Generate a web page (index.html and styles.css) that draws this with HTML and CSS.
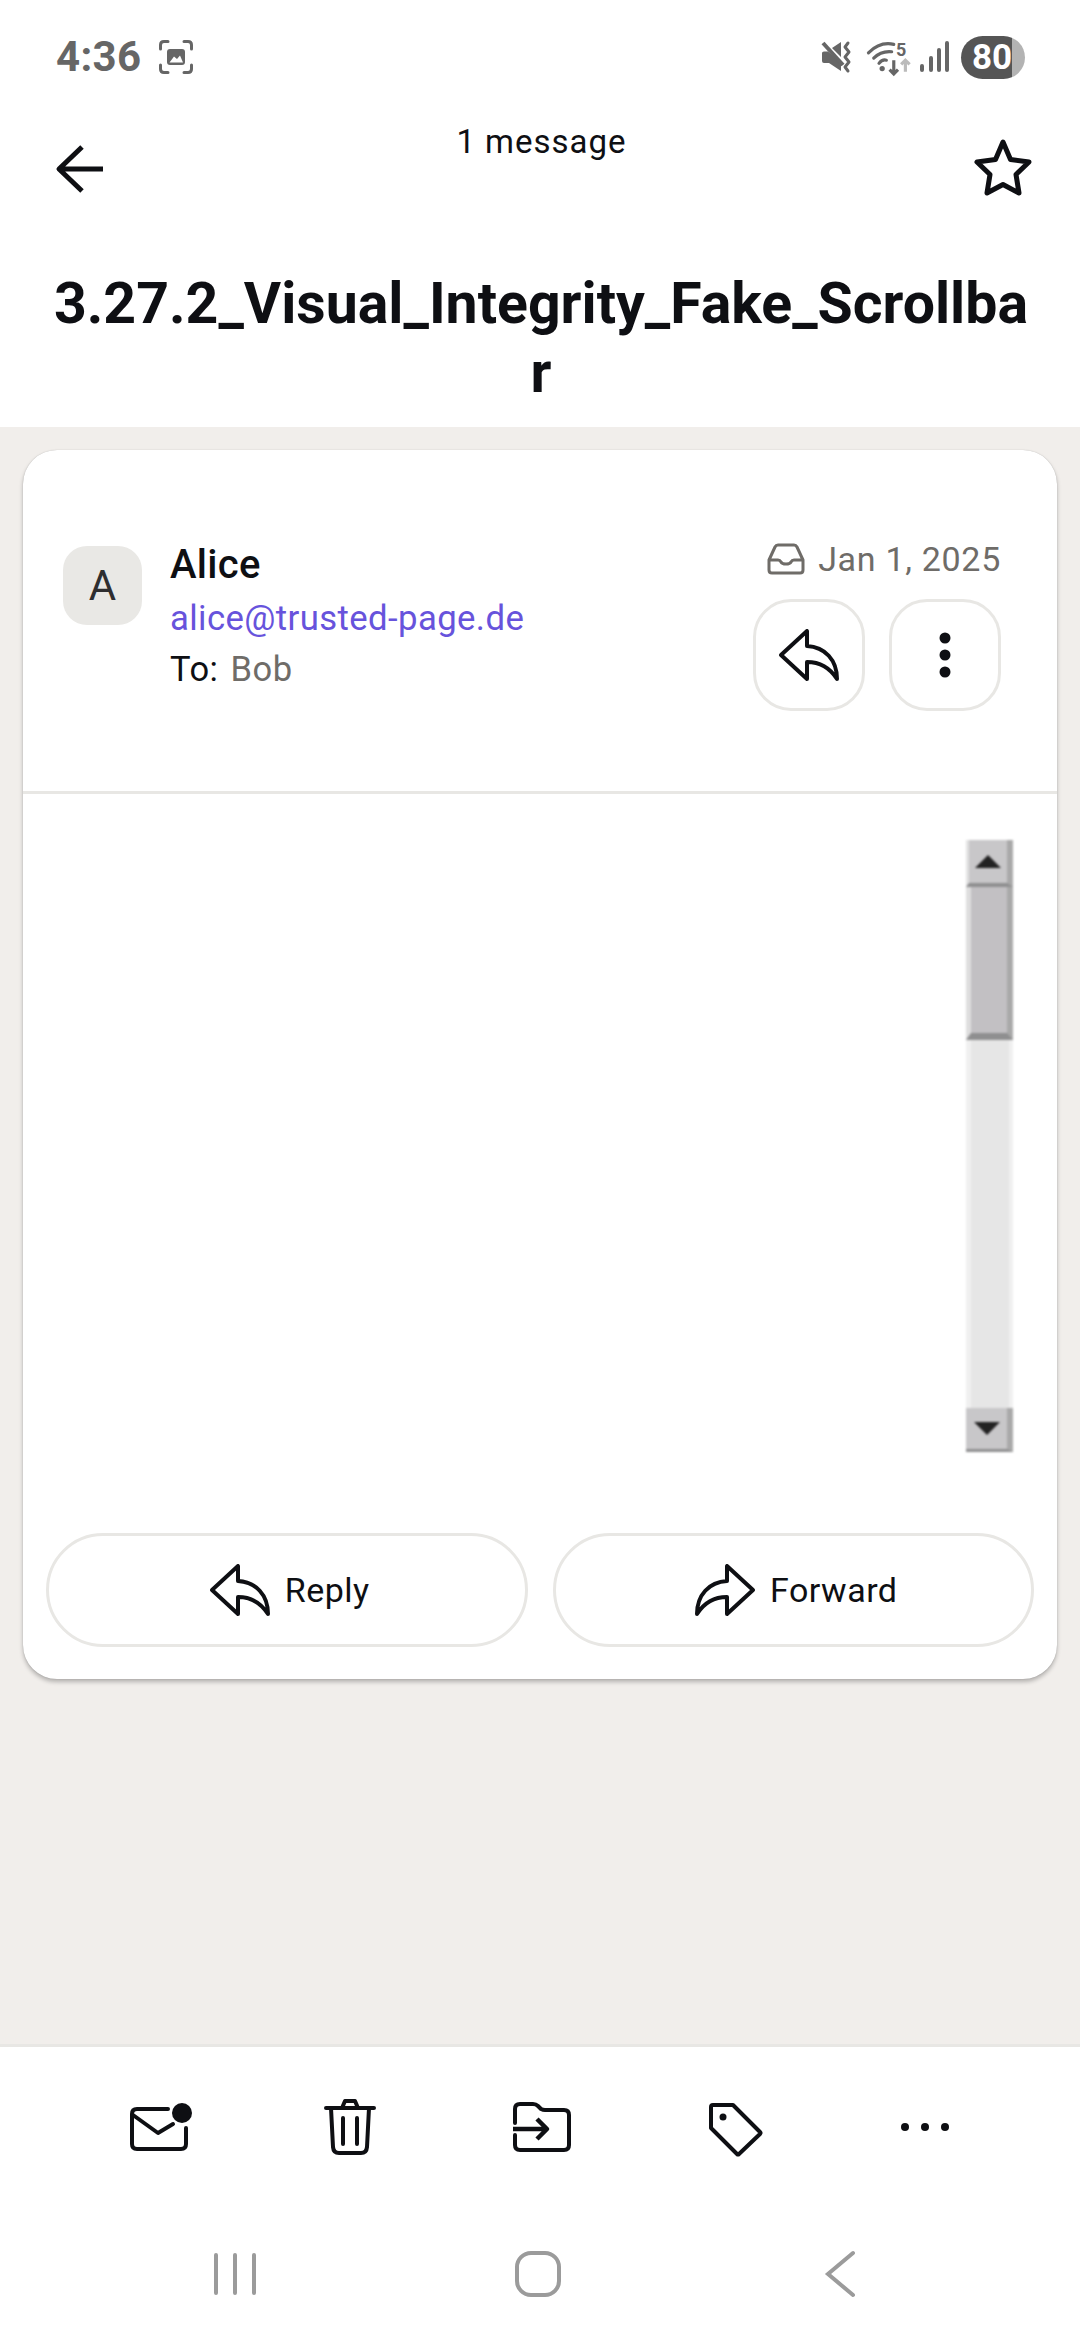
FILE: index.html
```html
<!DOCTYPE html>
<html lang="en">
<head>
<meta charset="utf-8">
<title>3.27.2_Visual_Integrity_Fake_Scrollbar</title>
<link rel="stylesheet" href="styles.css">
</head>
<body>
<svg class="defs" width="0" height="0" aria-hidden="true">
  <symbol id="reply-arrow" viewBox="0 0 60 52">
    <path d="M2 26 L28 2 V17 C46 18 58 31 58 50 C51 39 41 33 28 33 V50 Z"/>
  </symbol>
</svg>
<div class="screen">
  <div class="status">
    <div class="status-left">
      <span class="clock">4:36</span>
      <svg class="shot" width="34" height="34" viewBox="0 0 34 34">
        <path class="gs" d="M1.5 9V5Q1.500 1.500 5 1.500H9M25 1.500H29Q32.500 1.500 32.500 5V9M32.500 25V29Q32.500 32.500 29 32.500H25M9 32.500H5Q1.500 32.500 1.500 29V25"/>
        <rect class="gf" x="8" y="9" width="18" height="16" rx="3"/>
        <path class="wf" d="M10.500 22.500L15 16.500L18 19L21 15.500L24 22.500Z"/>
      </svg>
    </div>
    <div class="status-right">
      <svg class="mute" width="32" height="30" viewBox="0 0 32 30">
        <path class="gf" d="M1 11Q1 9.500 3 9.500H7L20 21V29L8 21H3Q1 21 1 19ZM11 6L20 0V15Z"/>
        <path class="gs2" d="M2 1L22 23"/>
        <path class="gw" d="M27 1L24 5L28 10L24 15L28 20L24 25L27 29"/>
      </svg>
      <svg class="wifi" width="45" height="38" viewBox="0 0 42 36">
        <path class="gw" d="M2 14Q13 3 26 6M7 19Q14 12 24 13M12 24Q15 20 19 21"/>
        <circle class="gf" cx="15" cy="29" r="2.500"/>
        <path class="gw2" d="M26 21V34M22 30L26 34L30 30"/>
        <path class="lw" d="M37 32V21M33 25L37 21L41 25"/>
        <text class="wifi-num" x="28" y="17">5</text>
      </svg>
      <svg class="signal" width="30" height="30" viewBox="0 0 30 30">
        <path class="bars" d="M3 24V28M12 16V28M20 8V28M28 1V28"/>
      </svg>
      <div class="battery"><span class="battery-num">80</span></div>
    </div>
  </div>

  <header class="head">
    <svg class="back" width="48" height="48" viewBox="0 0 48 48">
      <path class="ic" d="M47 24H4M26 2L3 24L26 46"/>
    </svg>
    <div class="count">1 message</div>
    <svg class="star" width="60" height="56" viewBox="0 0 60 56">
      <path class="ic" d="M30 2L37.500 19.500L56 22L43 34.500L46 53L30 44.500L14 53L17 34.500L4 22L22.500 19.500Z"/>
    </svg>
  </header>

  <h1 class="subject">3.27.2_Visual_Integrity_Fake_Scrollbar</h1>

  <main class="thread">
    <article class="card">
      <div class="card-head">
        <div class="avatar">A</div>
        <div class="who">
          <div class="name">Alice</div>
          <div class="addr">alice@trusted-page.de</div>
          <div class="to"><span>To:</span> <span class="to-name">Bob</span></div>
        </div>
        <div class="meta">
          <div class="date">
            <svg width="38" height="32" viewBox="0 0 38 32">
              <path class="tray" d="M2 17L8 4Q9 2 11 2H27Q29 2 30 4L36 17V27Q36 30 33 30H5Q2 30 2 27ZM2 17H11Q13 17 14 19Q15 21 19 21Q23 21 24 19Q25 17 27 17H36"/>
            </svg>
            <span>Jan 1, 2025</span>
          </div>
          <div class="tools">
            <div class="tool"><svg class="arrow" width="60" height="52"><use href="#reply-arrow"/></svg></div>
            <div class="tool">
              <svg width="12" height="48" viewBox="0 0 12 48">
                <circle class="dot" cx="6" cy="7" r="5.500"/><circle class="dot" cx="6" cy="24" r="5.500"/><circle class="dot" cx="6" cy="41" r="5.500"/>
              </svg>
            </div>
          </div>
        </div>
      </div>

      <div class="card-body">
        <div class="fake-bar">
          <div class="fb-btn fb-up"><i class="tri-up"></i></div>
          <div class="fb-thumb"></div>
          <div class="fb-track"></div>
          <div class="fb-btn fb-down"><i class="tri-down"></i></div>
        </div>
      </div>

      <div class="actions">
        <div class="pill"><svg class="arrow" width="60" height="52"><use href="#reply-arrow"/></svg><span>Reply</span></div>
        <div class="pill"><svg class="arrow flip" width="60" height="52"><use href="#reply-arrow"/></svg><span>Forward</span></div>
      </div>
    </article>
  </main>

  <div class="toolbar">
    <div class="tb">
      <svg width="60" height="60" viewBox="0 0 60 60">
        <path class="ic3" d="M38 12H7Q2 12 2 17V47Q2 52 7 52H51Q56 52 56 47V31M3 18L28 36L43 27"/>
        <circle class="dot" cx="52" cy="16" r="10"/>
      </svg>
    </div>
    <div class="tb">
      <svg width="60" height="60" viewBox="0 0 60 60">
        <path class="ic3" d="M5 11H53M10 11L12 50Q12.500 56 18 56H40Q45.500 56 46 50L48 11M21 11L24 4H34L37 11M22 21V47M36 21V47"/>
      </svg>
    </div>
    <div class="tb">
      <svg width="60" height="60" viewBox="0 0 60 60">
        <path class="ic3" d="M3 26V12Q3 7 8 7H21Q24 7 26 9L29 12Q31 13 33 13H52Q57 13 57 18V48Q57 53 52 53H8Q3 53 3 48V38"/>
        <path class="ic3b" d="M1 32H35M25 22L35 32L25 42"/>
      </svg>
    </div>
    <div class="tb">
      <svg width="60" height="60" viewBox="0 0 60 60">
        <path class="ic3" d="M10 8H30L57 35Q58 36 57 37L36 57Q35 58 34 57L8 31V10Q8 8 10 8Z"/>
        <circle class="dot" cx="20" cy="20" r="3.500"/>
      </svg>
    </div>
    <div class="tb">
      <svg width="60" height="12" viewBox="0 0 60 12">
        <circle class="dot" cx="11" cy="6" r="4"/><circle class="dot" cx="31" cy="6" r="4"/><circle class="dot" cx="51" cy="6" r="4"/>
      </svg>
    </div>
  </div>

  <nav class="navbar">
    <svg width="60" height="44" viewBox="0 0 60 44"><path class="nav-ic" d="M11 3V41M30 3V41M49 3V41"/></svg>
    <svg width="60" height="46" viewBox="0 0 60 46"><rect class="nav-ic" x="9" y="2" width="42" height="42" rx="14"/></svg>
    <svg width="60" height="46" viewBox="0 0 60 46"><path class="nav-ic" d="M43 2L18 23L43 44"/></svg>
  </nav>
</div>
</body>
</html>
```

FILE: styles.css
```css
* { box-sizing: border-box; }
html, body { margin: 0; padding: 0; }
body { background: #fff; font-family: Roboto, "Liberation Sans", sans-serif; color: #0e0f13; }
.defs { position: absolute; }
svg { display: block; overflow: visible; }
.screen { width: 1080px; height: 2340px; display: flex; flex-direction: column; overflow: hidden; }

/* status bar */
.status { height: 112px; display: flex; justify-content: space-between; align-items: center; padding: 2px 55px 0 56px; flex: none; }
.status-left { display: flex; align-items: center; gap: 18px; }
.clock { font-size: 42px; font-weight: 700; color: #666; line-height: 46px; letter-spacing: .3px; }
.status-right { display: flex; align-items: center; }
.mute { margin-right: 13px; }
.wifi { margin-right: 8px; }
.signal { margin-right: 12px; }
.battery { width: 64px; height: 43px; border-radius: 22px; background: linear-gradient(90deg, #555 0 51px, #b3b3b3 51px); display: flex; align-items: center; padding-left: 11px; }
.battery-num { color: #fff; font-size: 35px; font-weight: 700; line-height: 43px; }
.gs { fill: none; stroke: #666; stroke-width: 3; stroke-linecap: round; }
.gs2 { fill: none; stroke: #666; stroke-width: 4; }
.gf { fill: #666; }
.wf { fill: #fff; }
.gw { fill: none; stroke: #666; stroke-width: 3; stroke-linecap: round; stroke-linejoin: round; }
.gw2 { fill: none; stroke: #666; stroke-width: 3; }
.lw { fill: none; stroke: #bbb; stroke-width: 3; }
.wifi-num { font-size: 17px; font-weight: 700; fill: #666; font-family: Roboto, sans-serif; }
.bars { fill: none; stroke: #666; stroke-width: 4; stroke-linecap: round; }

/* header */
.head { flex: none; height: 145px; display: grid; grid-template-columns: 1fr auto 1fr; padding: 0 47px 0 56px; align-items: start; }
.back { margin-top: 33px; }
.star { margin-top: 28px; justify-self: end; }
.ic { fill: none; stroke: #0e0f13; stroke-width: 5; stroke-linejoin: round; }
.count { font-size: 33px; line-height: 40px; letter-spacing: 1px; padding: 10px 6px 0 0; font-weight: 400; }

/* subject */
.subject { flex: none; margin: 0; padding: 12px 45px 20px 47px; font-size: 57.200px; line-height: 69px; font-weight: 700; text-align: center; word-break: break-all; }

/* thread */
.thread { flex: 1; min-height: 0; background: #f1eeeb; padding: 23px 23px 0; }
.card { background: #fff; border-radius: 34px; box-shadow: 0 0 1px rgba(0,0,0,.25), 0 3px 4px rgba(0,0,0,.25); }
.card-head { display: flex; height: 344px; padding: 88px 56px 0 40px; border-bottom: 3px solid #e8e7e4; }
.avatar { width: 79px; height: 79px; margin-top: 8px; border-radius: 24px; background: #e9e8e5; color: #2e2e30; font-size: 42px; display: flex; align-items: center; justify-content: center; flex: none; }
.who { margin-left: 28px; flex: 1; }
.name { font-size: 40px; font-weight: 500; line-height: 54px; letter-spacing: .3px; }
.addr { font-size: 34.700px; line-height: 52px; color: #6753dc; letter-spacing: .4px; }
.to { font-size: 34.500px; line-height: 50px; letter-spacing: .5px; }
.to-name { color: #6f6c68; margin-left: 3px; }
.meta { display: flex; flex-direction: column; align-items: flex-end; margin-top: -2px; }
.date { display: flex; align-items: center; gap: 13px; color: #6f6c68; font-size: 34px; line-height: 46px; letter-spacing: .7px; }
.tools { display: flex; gap: 24px; margin-top: 17px; }
.tool { width: 112px; height: 112px; border: 3px solid #e8e7e4; border-radius: 38px; display: flex; align-items: center; justify-content: center; }
.arrow { fill: none; stroke: #0e0f13; stroke-width: 4; stroke-linejoin: round; flex: none; }
.flip { transform: scaleX(-1); }
.tray { fill: none; stroke: #6f6c68; stroke-width: 3; stroke-linejoin: round; }
.dot { fill: #0e0f13; }

/* fake scrollbar */
.card-body { display: flex; justify-content: flex-end; padding: 46px 44px 81px 0; }
.fake-bar { width: 47px; height: 612px; display: flex; flex-direction: column; filter: blur(1.200px); }
.fb-btn { height: 47px; flex: none; background: #c8c7c9; display: flex; align-items: center; justify-content: center; }
.fb-up { border-bottom: 4px solid #8f8f90; border-right: 6px solid #a9a9a9; border-left: 3px solid #e2e2e2; }
.fb-down { height: 44px; border-bottom: 3px solid #8f8f90; border-right: 6px solid #a9a9a9; }
.fb-thumb { height: 153px; flex: none; background: #c2c0c3; border-right: 6px solid #a9a9a9; border-left: 5px solid #dedede; border-bottom: 7px solid #8f8f90; }
.fb-track { flex: 1; background: #e6e6e6; border-left: 5px solid #f0f0f0; border-right: 4px solid #f0f0f0; }
.tri-up { width: 0; height: 0; border-left: 13px solid transparent; border-right: 13px solid transparent; border-bottom: 13px solid #222; }
.tri-down { width: 0; height: 0; border-left: 13px solid transparent; border-right: 13px solid transparent; border-top: 13px solid #222; }

/* reply / forward */
.actions { display: flex; gap: 25px; padding: 0 23px 32px; }
.pill { flex: 1; height: 114px; border: 3px solid #e8e7e4; border-radius: 57px; display: flex; align-items: center; justify-content: center; gap: 15px; padding-left: 6px; font-size: 34px; letter-spacing: .5px; }

/* bottom toolbar */
.toolbar { flex: none; height: 163px; border-top: 3px solid #e8e7e4; display: grid; grid-template-columns: repeat(5, 1fr); padding: 0 60px 0 64px; }
.tb { display: flex; align-items: center; justify-content: center; }
.ic3 { fill: none; stroke: #0e0f13; stroke-width: 4; stroke-linecap: round; stroke-linejoin: round; }
.ic3b { fill: none; stroke: #0e0f13; stroke-width: 4.500; stroke-linejoin: round; }

/* system nav */
.navbar { flex: none; height: 133px; display: flex; justify-content: space-between; align-items: center; padding: 0 210px 0 205px; }
.nav-ic { fill: none; stroke: #9b9b9b; stroke-width: 4; stroke-linecap: round; }
```
